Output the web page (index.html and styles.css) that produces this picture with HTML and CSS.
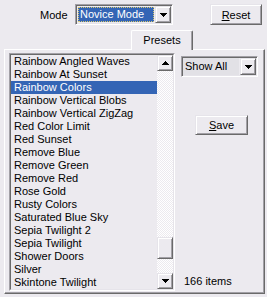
FILE: index.html
```html
<!DOCTYPE html>
<html>
<head>
<meta charset="utf-8">
<link rel="stylesheet" href="styles.css">
</head>
<body>
<div class="top">
  <span class="label">Mode</span>
  <div class="combo mode">
    <div class="field sel"><span class="focus">Novice Mode</span></div>
    <div class="dd raised"><svg width="7" height="4" viewBox="0 0 7 4"><path d="M0 0h7v1H0zM1 1h5v1H1zM2 2h3v1H2zM3 3h1v1H3z"/></svg></div>
  </div>
  <div class="btn reset raised"><u>R</u>eset</div>
</div>
<div class="tabstrip">
  <div class="tab">Presets</div>
</div>
<div class="panel">
  <div class="listbox">
    <div class="lbinner">
      <div class="items">
        <div class="row">Rainbow Angled Waves</div>
        <div class="row">Rainbow At Sunset</div>
        <div class="row selrow">Rainbow Colors</div>
        <div class="row">Rainbow Vertical Blobs</div>
        <div class="row">Rainbow Vertical ZigZag</div>
        <div class="row">Red Color Limit</div>
        <div class="row">Red Sunset</div>
        <div class="row">Remove Blue</div>
        <div class="row">Remove Green</div>
        <div class="row">Remove Red</div>
        <div class="row">Rose Gold</div>
        <div class="row">Rusty Colors</div>
        <div class="row">Saturated Blue Sky</div>
        <div class="row">Sepia Twilight 2</div>
        <div class="row">Sepia Twilight</div>
        <div class="row">Shower Doors</div>
        <div class="row">Silver</div>
        <div class="row">Skintone Twilight</div>
      </div>
      <div class="vscroll">
        <div class="sbtn raised"><svg width="7" height="4" viewBox="0 0 7 4"><path d="M3 0h1v1H3zM2 1h3v1H2zM1 2h5v1H1zM0 3h7v1H0z"/></svg></div>
        <div class="track"><div class="thumb raised"></div></div>
        <div class="sbtn raised"><svg width="7" height="4" viewBox="0 0 7 4"><path d="M0 0h7v1H0zM1 1h5v1H1zM2 2h3v1H2zM3 3h1v1H3z"/></svg></div>
      </div>
    </div>
  </div>
  <div class="side">
    <div class="combo showall">
      <div class="field plain">Show All</div>
      <div class="dd raised"><svg width="7" height="4" viewBox="0 0 7 4"><path d="M0 0h7v1H0zM1 1h5v1H1zM2 2h3v1H2zM3 3h1v1H3z"/></svg></div>
    </div>
    <div class="btn save raised"><u>S</u>ave</div>
    <div class="count">166 items</div>
  </div>
</div>
</body>
</html>
```
FILE: styles.css
```css
html, body {
  margin: 0;
  padding: 0;
}
body {
  width: 267px;
  height: 297px;
  background: #ECEAEF;
  font-family: "Liberation Sans", Arial, sans-serif;
  font-size: 11px;
  color: #000;
  overflow: hidden;
}
.raised {
  box-sizing: border-box;
  border: 1px solid;
  border-color: #e6e4ea #6a6a6a #6a6a6a #e6e4ea;
  box-shadow: inset 1px 1px #fff, inset -1px -1px #a2a0a6;
  background: #ECEAEF;
}
.top {
  display: flex;
  align-items: center;
  height: 21px;
  padding-top: 4px;
}
.label {
  margin-left: 40px;
  width: 27px;
  margin-right: 8px;
}
.combo {
  box-sizing: border-box;
  display: flex;
  height: 21px;
  border: 1px solid;
  border-color: #a2a0a6 #fff #fff #a2a0a6;
  box-shadow: inset 1px 1px #6a6a6a, inset -1px -1px #e6e4ea;
  padding: 2px;
  gap: 1px;
}
.combo.mode {
  width: 98px;
}
.field {
  flex: 1;
  display: flex;
  align-items: center;
  line-height: 13px;
}
.field.sel {
  background: #3465B5;
  color: #fff;
  border: 1px dotted #d8c870;
  padding-left: 1px;
}
.field.plain {
  background: #E2E1E6;
  padding-left: 2px;
  margin: -1px 0 -1px -1px;
}
.dd {
  width: 16px;
  display: flex;
  align-items: center;
  justify-content: center;
  margin: -1px -1px -1px 0;
}
.btn {
  display: flex;
  align-items: center;
  justify-content: center;
  height: 21px;
  width: 52px;
}
.reset {
  margin-left: 37px;
}
.tabstrip {
  display: flex;
  margin-top: 5px;
  padding-left: 131px;
  position: relative;
  z-index: 1;
}
.tab {
  box-sizing: border-box;
  width: 62px;
  height: 20px;
  background: #ECEAEF;
  border-top: 1px solid #fff;
  border-left: 1px solid #fff;
  border-right: 1px solid #6a6a6a;
  box-shadow: inset -1px 0 #a2a0a6;
  border-radius: 2px 2px 0 0;
  display: flex;
  justify-content: center;
  padding-top: 3px;
  margin-bottom: -1px;
}
.panel {
  box-sizing: border-box;
  margin-left: 4px;
  width: 261px;
  height: 245px;
  border: 1px solid;
  border-color: #fff #6a6a6a #6a6a6a #fff;
  box-shadow: inset -1px -1px #a2a0a6;
  display: flex;
  padding: 3px 0 0 4px;
}
.listbox {
  border: 1px solid;
  border-color: #a2a0a6 #fff #fff #a2a0a6;
  height: 236px;
}
.lbinner {
  border: 1px solid;
  border-color: #6a6a6a #e6e4ea #e6e4ea #6a6a6a;
  display: flex;
  height: 234px;
  background: #ECEAEF;
}
.items {
  width: 146px;
  overflow: hidden;
}
.row {
  height: 13px;
  line-height: 13px;
  padding-left: 3px;
  white-space: nowrap;
}
.selrow {
  background: #3465B5;
  color: #fff;
}
.vscroll {
  width: 16px;
  display: flex;
  flex-direction: column;
  background: repeating-conic-gradient(#fff 0 25%, #ECEAEF 0 50%) 0 0 / 2px 2px;
}
.sbtn {
  width: 16px;
  height: 16px;
  display: flex;
  align-items: center;
  justify-content: center;
}
.track {
  flex: 1;
  display: flex;
  flex-direction: column;
}
.thumb {
  width: 16px;
  height: 22px;
  margin-top: 166px;
}
.side {
  display: flex;
  flex-direction: column;
  padding-left: 6px;
  height: 236px;
}
.combo.showall {
  width: 77px;
  margin-top: 3px;
}
.save {
  width: 53px;
  height: 20px;
  margin-top: 38px;
  margin-left: 14px;
}
.count {
  margin-top: auto;
  margin-left: 3px;
  line-height: 13px;
  margin-bottom: 1px;
}
```
